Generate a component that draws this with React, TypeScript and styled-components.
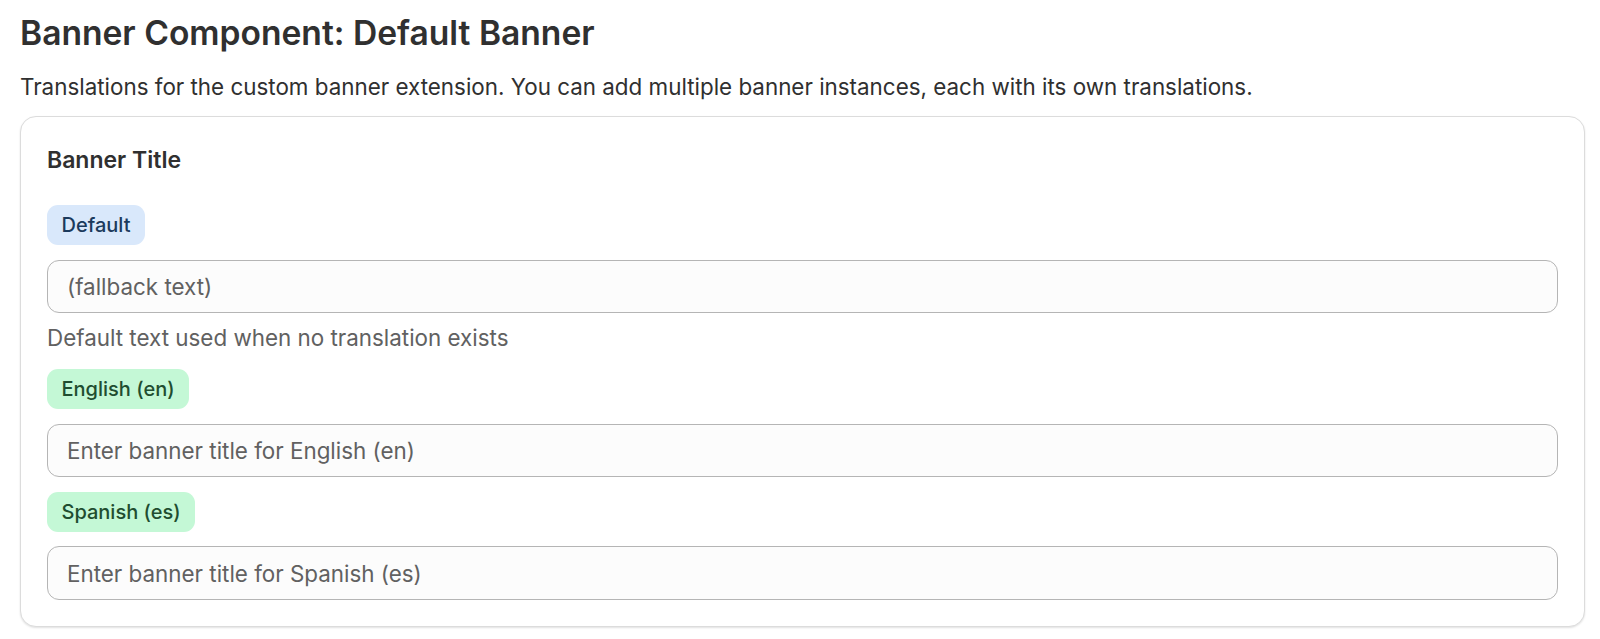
import React from "react";
import styled, { createGlobalStyle } from "styled-components";

const GlobalStyle = createGlobalStyle`
  html, body {
    margin: 0;
    padding: 0;
    background: #ffffff;
  }
  body {
    font-family: Inter, "Noto Sans", "Liberation Sans", sans-serif;
    color: #303030;
    -webkit-font-smoothing: antialiased;
  }
`;

type Tone = "info" | "success";

interface Locale {
  label: string;
  tone: Tone;
  placeholder: string;
  hint?: string;
}

const locales: Locale[] = [
  {
    label: "Default",
    tone: "info",
    placeholder: "(fallback text)",
    hint: "Default text used when no translation exists",
  },
  { label: "English (en)", tone: "success", placeholder: "Enter banner title for English (en)" },
  { label: "Spanish (es)", tone: "success", placeholder: "Enter banner title for Spanish (es)" },
];

export default function App() {
  return (
    <>
      <GlobalStyle />
      <Page>
        <Heading>Banner Component: Default Banner</Heading>
        <Lead>
          Translations for the custom banner extension. You can add multiple banner instances, each with its own
          translations.
        </Lead>
        <Card>
          <CardTitle>Banner Title</CardTitle>
          <FieldList>
            {locales.map((l) => (
              <React.Fragment key={l.label}>
                <Badge $tone={l.tone}>{l.label}</Badge>
                <TextInput type="text" placeholder={l.placeholder} />
                {l.hint && <Hint>{l.hint}</Hint>}
              </React.Fragment>
            ))}
          </FieldList>
        </Card>
      </Page>
    </>
  );
}

const Page = styled.div`
  padding: 13px 15px 12px 20px;
  display: flex;
  flex-direction: column;
`;

const Heading = styled.h1`
  margin: 0;
  font-size: 33.6px;
  line-height: 40px;
  font-weight: 600;
  color: #303030;
`;

const Lead = styled.p`
  margin: 18.5px 0 14.5px;
  font-size: 22.4px;
  line-height: 30px;
  color: #303030;
`;

const Card = styled.section`
  border: 1px solid #dcdcdc;
  border-radius: 16px;
  box-shadow: 0 1px 2px rgba(0, 0, 0, 0.12);
  padding: 28px 26px 26.5px;
  background: #ffffff;
`;

const CardTitle = styled.h2`
  margin: 0 0 30px;
  font-size: 23px;
  line-height: 30px;
  font-weight: 600;
  color: #303030;
`;

const FieldList = styled.div`
  display: flex;
  flex-direction: column;
  align-items: flex-start;
  gap: 14.5px;
`;

const Badge = styled.span<{ $tone: Tone }>`
  display: inline-block;
  padding: 6px 14.5px;
  border-radius: 11px;
  font-size: 20px;
  line-height: 28px;
  font-weight: 500;
  background: ${(p) => (p.$tone === "info" ? "#d9e8fb" : "#c4f8d6")};
  color: ${(p) => (p.$tone === "info" ? "#1b3a5c" : "#1f4d30")};
`;

const TextInput = styled.input`
  box-sizing: border-box;
  width: 100%;
  height: 53.5px;
  padding: 0 19px;
  border: 1px solid #b5b5b5;
  border-radius: 12px;
  background: #fcfcfc;
  font-family: inherit;
  font-size: 22.4px;
  color: #303030;
  outline: none;

  &::placeholder {
    color: #616161;
    opacity: 1;
  }
`;

const Hint = styled.p`
  margin: -5px 0 2.3px;
  font-size: 22.4px;
  line-height: 30px;
  color: #616161;
`;
